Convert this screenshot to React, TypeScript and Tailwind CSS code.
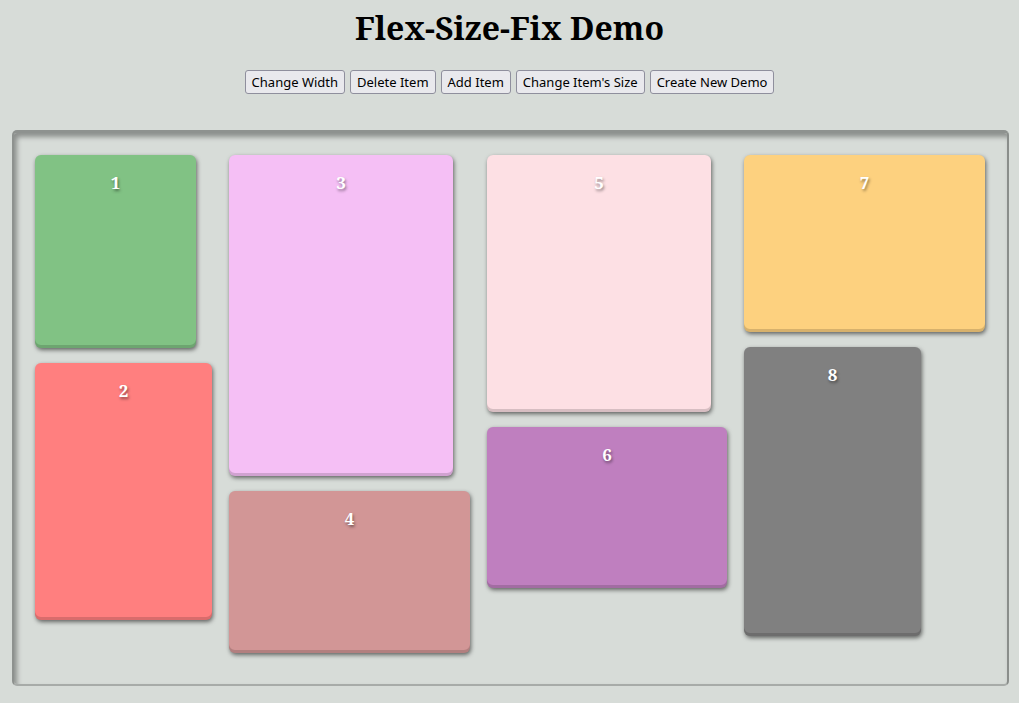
import React from "react";

type Card = { n: number; size: string; bg: string };

const columns: { w: string; cards: Card[] }[] = [
  {
    w: "w-[177px]",
    cards: [
      { n: 1, size: "w-[161px] h-[193px]", bg: "bg-[#81c284]" },
      { n: 2, size: "w-[177px] h-[257px]", bg: "bg-[#ff7f7f]" },
    ],
  },
  {
    w: "w-[241px]",
    cards: [
      { n: 3, size: "w-[224px] h-[321px]", bg: "bg-[#f5bff5]" },
      { n: 4, size: "w-[241px] h-[162px]", bg: "bg-[#d29696]" },
    ],
  },
  {
    w: "w-[240px]",
    cards: [
      { n: 5, size: "w-[224px] h-[257px]", bg: "bg-[#fde0e4]" },
      { n: 6, size: "w-[240px] h-[161px]", bg: "bg-[#bf7fbf]" },
    ],
  },
  {
    w: "w-[241px]",
    cards: [
      { n: 7, size: "w-[241px] h-[177px]", bg: "bg-[#fdd17f]" },
      { n: 8, size: "w-[177px] h-[289px]", bg: "bg-[#808080]" },
    ],
  },
];

const buttons = ["Change Width", "Delete Item", "Add Item", "Change Item's Size", "Create New Demo"];

export default function App() {
  return (
    <div className="min-h-[703px] w-[1019px] bg-[#d7dcd8] pt-[9px] font-['Noto_Serif','DejaVu_Serif',serif]">
      <h1 className="text-center text-[32px] font-bold leading-[38px] text-black">
        Flex-Size-Fix Demo
      </h1>
      <div className="mt-[23px] flex justify-center gap-[5px] font-['Noto_Sans','Open_Sans',sans-serif]">
        {buttons.map((b) => (
          <button
            key={b}
            className="h-[24px] rounded-[3px] border border-[#8f8f9d] bg-[#e9e9ed] px-[6px] text-[13px] leading-[20px] text-black"
          >
            {b}
          </button>
        ))}
      </div>
      <div className="ml-[12px] mt-[36px] h-[556px] w-[997px] rounded-[5px] border-2 border-t-[3px] border-[#8e928f] border-b-[#a7aba8] border-r-[#8a8e8b] pl-[21px] pt-[22px] shadow-[inset_3px_4px_5px_rgba(0,0,0,0.35)]">
        <div className="flex gap-[17px]">
          {columns.map((col, i) => (
            <div key={i} className={`flex flex-col gap-[15px] ${col.w}`}>
              {col.cards.map((c) => (
                <div
                  key={c.n}
                  className={`${c.bg} ${c.size} rounded-[6px] pt-[16px] text-center shadow-[inset_0_-3px_0_rgba(0,0,0,0.15),1px_2px_4px_rgba(0,0,0,0.55)]`}
                >
                  <span className="text-[17px] font-bold leading-[22px] text-white [text-shadow:1px_2px_3px_rgba(0,0,0,0.45)]">
                    {c.n}
                  </span>
                </div>
              ))}
            </div>
          ))}
        </div>
      </div>
    </div>
  );
}
